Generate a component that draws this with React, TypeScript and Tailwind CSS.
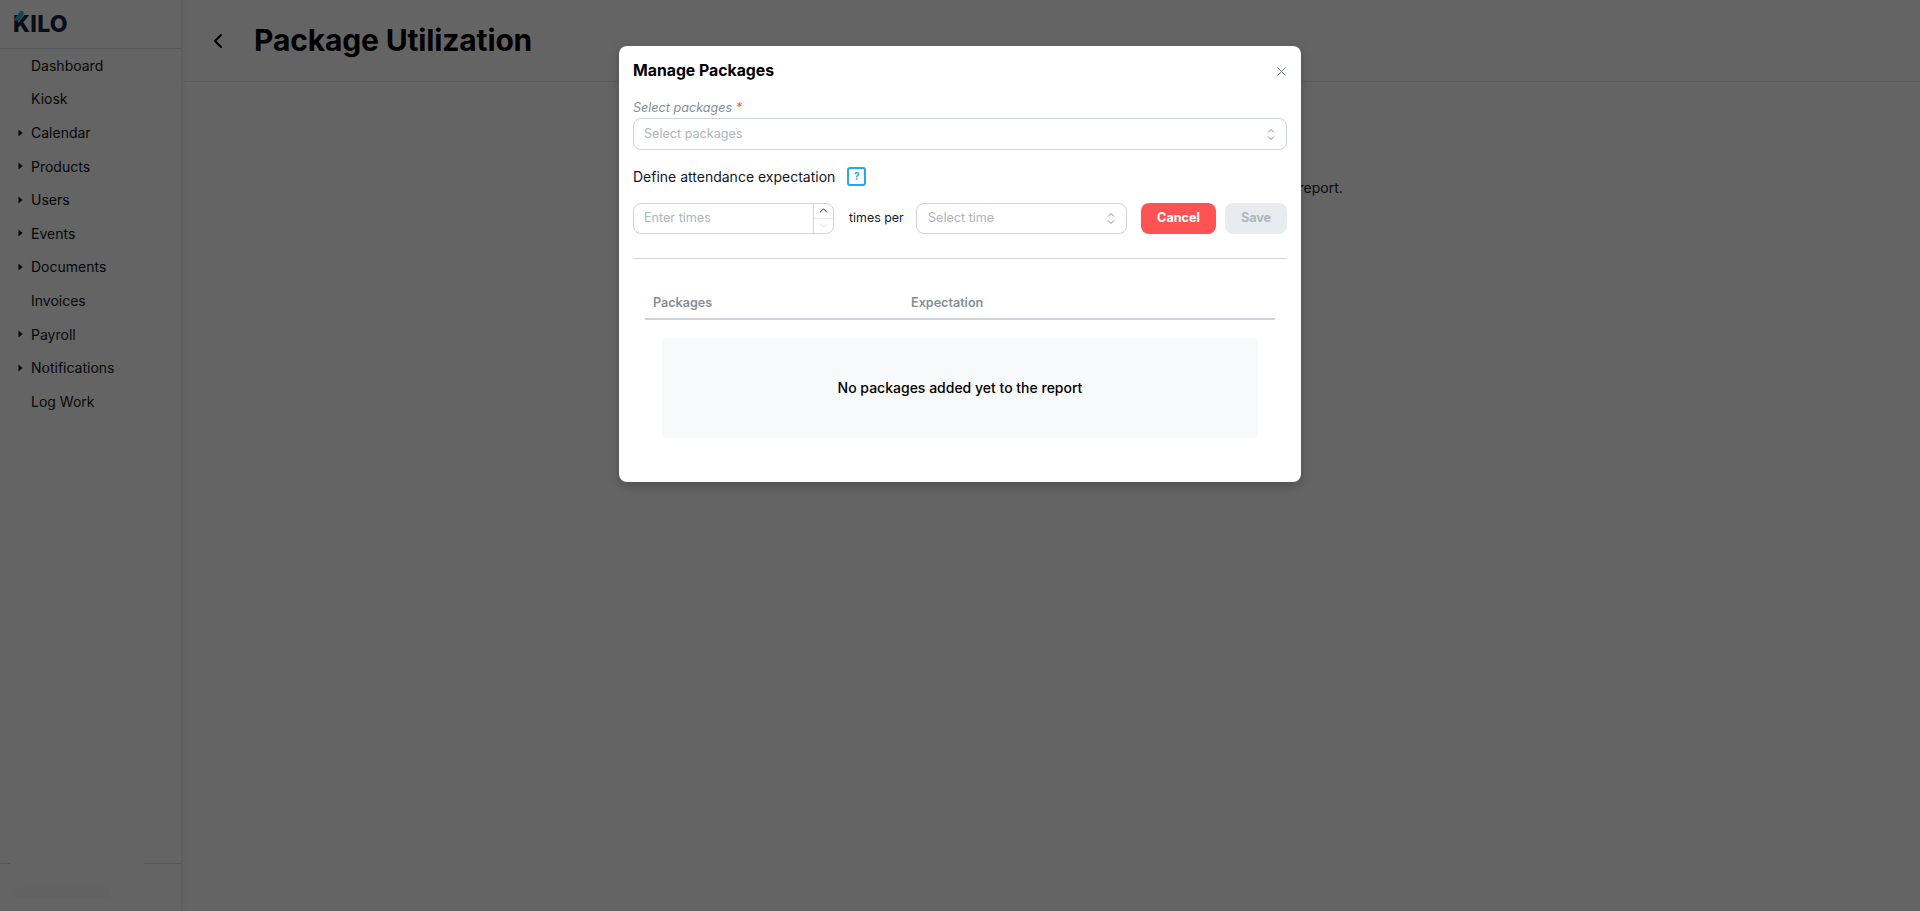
import React from "react";
import { ChevronLeft, ChevronUp, ChevronDown, X } from "lucide-react";

const navItems = [
  { label: "Dashboard", caret: false },
  { label: "Kiosk", caret: false },
  { label: "Calendar", caret: true },
  { label: "Products", caret: true },
  { label: "Users", caret: true },
  { label: "Events", caret: true },
  { label: "Documents", caret: true },
  { label: "Invoices", caret: false },
  { label: "Payroll", caret: true },
  { label: "Notifications", caret: true },
  { label: "Log Work", caret: false },
];

function SelectorIcon() {
  return (
    <svg width="10" height="15" viewBox="0 0 10 15" fill="none" stroke="#868e96" strokeWidth="1" className="shrink-0">
      <polyline points="2,5.5 5,2.5 8,5.5" />
      <polyline points="2,9.5 5,12.5 8,9.5" />
    </svg>
  );
}

function Sidebar() {
  return (
    <aside className="w-[182px] shrink-0 flex flex-col border-r border-[#e5e7eb] shadow-[2px_0_6px_rgba(0,0,0,0.06)]">
      <div className="relative h-[49px] shrink-0 border-b border-[#d1d5db] pl-[13px] pt-[7px]">
        <span className="block text-[23px] leading-[34px] font-extrabold tracking-[0.3px] text-[#10243e]">KILO</span>
        <svg width="10" height="10" viewBox="0 0 10 10" className="absolute left-[14px] top-[11px]">
          <polygon points="0,9.5 6,0 9.5,0 9.5,4 6,9.5" fill="#25b4e0" />
        </svg>
      </div>
      <nav className="flex-1 -mt-[0.5px]">
        {navItems.map((item) => (
          <div key={item.label} className="h-[33.6px] flex items-center relative pl-[31px] text-[14px] text-[#111111]">
            {item.caret && (
              <svg width="5" height="8" viewBox="0 0 5 8" className="absolute left-[18px] top-[13px]">
                <polygon points="0.5,0.5 4.5,4 0.5,7.5" fill="#111111" />
              </svg>
            )}
            {item.label}
          </div>
        ))}
      </nav>
      <div className="relative h-[48px] shrink-0 border-t border-[#d1d5db]">
        <div className="absolute left-[10px] -top-[2px] w-[134px] h-[6px] bg-[#fbfbfb]" />
        <div className="absolute left-[12px] top-[24px] w-[98px] h-[9px] bg-[#f1f2f4] blur-[3px]" />
      </div>
    </aside>
  );
}

function ManagePackagesModal() {
  return (
    <div className="absolute left-[619px] top-[46px] w-[682px] h-[436px] bg-white rounded-[8px] shadow-[0_4px_12px_rgba(0,0,0,0.2)] px-[14px] pt-[15px] text-black">
      <div className="flex items-center justify-between h-[20px]">
        <h2 className="text-[15.8px] font-bold leading-[20px]">Manage Packages</h2>
        <X size={15} strokeWidth={1.5} className="text-[#6b7280] mr-[-2px]" />
      </div>

      <div className="mt-[19px] text-[12.6px] leading-[16px] italic text-[#868e96]">
        Select packages <span className="text-[#ff5252]">*</span>
      </div>
      <div className="mt-[2px] h-[32px] border border-[#ced4da] rounded-[8px] flex items-center justify-between pl-[10px] pr-[10px] text-[12.6px] text-[#adb5bd]">
        <span>Select packages</span>
        <SelectorIcon />
      </div>

      <div className="mt-[16px] flex items-center h-[20px] text-[14px] text-[#111827]">
        <span>Define attendance expectation</span>
        <span className="ml-[12px] w-[19px] h-[19px] rounded-[3px] border-2 border-[#22a7f0] flex items-center justify-center text-[10px] font-bold text-[#22a7f0]">?</span>
      </div>

      <div className="mt-[16px] flex items-center h-[32px]">
        <div className="w-[201px] h-[31px] border border-[#ced4da] rounded-[8px] flex items-stretch text-[12.6px] text-[#adb5bd]">
          <span className="flex-1 pl-[10px] flex items-center">Enter times</span>
          <div className="w-[20px] border-l border-[#ced4da] flex flex-col">
            <div className="flex-1 flex items-center justify-center text-[#111827]">
              <ChevronUp size={13} strokeWidth={1.75} />
            </div>
            <div className="flex-1 flex items-center justify-center border-t border-[#e5e7eb] text-[#ced4da]">
              <ChevronDown size={13} strokeWidth={1.25} />
            </div>
          </div>
        </div>
        <span className="ml-[15px] w-[67px] text-[12.4px] text-[#111827]">times per</span>
        <div className="w-[211px] h-[31px] border border-[#ced4da] rounded-[8px] flex items-center justify-between pl-[11px] pr-[10px] text-[12.6px] text-[#adb5bd]">
          <span>Select time</span>
          <SelectorIcon />
        </div>
        <button className="ml-[14px] w-[75px] h-[31px] rounded-[8px] bg-[#ff5252] text-white text-[12.6px] font-bold">Cancel</button>
        <button className="ml-[9px] w-[62px] h-[31px] rounded-[8px] bg-[#e9ecef] text-[#adb5bd] text-[12.6px] font-bold">Save</button>
      </div>

      <div className="mt-[24px] border-t border-[#d1d5db]" />

      <div className="mx-[12px] mt-[31px] flex items-center h-[26px] pl-[8px] border-b-2 border-[#d1d5db] pb-[2px] box-content text-[12.6px] font-semibold text-[#868e96]">
        <span className="w-[258px]">Packages</span>
        <span>Expectation</span>
      </div>

      <div className="mx-[29px] mt-[18px] h-[100px] pb-[2px] rounded-[4px] bg-[#f8f9fa] flex items-center justify-center text-[14px] font-medium text-black">
        No packages added yet to the report
      </div>
    </div>
  );
}

export default function App() {
  return (
    <div className="relative w-full h-screen overflow-hidden bg-[#fbfbfb] flex font-['Inter',sans-serif]">
      <Sidebar />
      <main className="flex-1 flex flex-col min-w-0">
        <header className="h-[82px] shrink-0 border-b border-[#e5e7eb] flex items-center pl-[24px]">
          <ChevronLeft size={24} strokeWidth={2} className="text-black" />
          <h1 className="ml-[24px] text-[30px] font-bold text-black tracking-[-0.15px]">Package Utilization</h1>
        </header>
        <p className="mt-[95px] text-center text-[14px] text-[#111827]">
          No packages have been selected. Use Manage Packages to add packages to the report.
        </p>
      </main>
      <div className="absolute inset-0 bg-black/60" />
      <ManagePackagesModal />
    </div>
  );
}
